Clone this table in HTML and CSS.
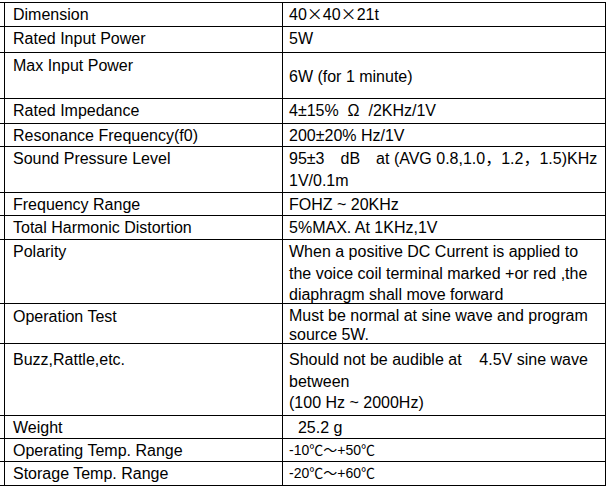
FILE: index.html
```html
<!DOCTYPE html>
<html>
<head>
<meta charset="utf-8">
<link rel="stylesheet" href="styles.css">
</head>
<body>
<div class="spec">
  <div class="row h24"><div class="k">Dimension</div><div class="v">40<span class="cjk">×</span>40<span class="cjk">×</span>21t</div></div>
  <div class="row h26"><div class="k">Rated Input Power</div><div class="v">5W</div></div>
  <div class="row h46"><div class="k p1">Max Input Power</div><div class="v mid">6W (for 1 minute)</div></div>
  <div class="row h25"><div class="k">Rated Impedance</div><div class="v">4±15%&nbsp; Ω&nbsp;&nbsp;/2KHz/1V</div></div>
  <div class="row h23"><div class="k">Resonance Frequency(f0)</div><div class="v">200±20% Hz/1V</div></div>
  <div class="row h46"><div class="k">Sound Pressure Level</div><div class="v">95±3<span class="cjk">　</span>dB<span class="cjk">　</span>at (AVG 0.8,1.0<span class="cjk">，</span>1.2<span class="cjk">，</span>1.5)KHz<br>1V/0.1m</div></div>
  <div class="row h23"><div class="k">Frequency Range</div><div class="v">FOHZ ~ 20KHz</div></div>
  <div class="row h24"><div class="k">Total Harmonic Distortion</div><div class="v">5%MAX. At 1KHz,1V</div></div>
  <div class="row h64"><div class="k">Polarity</div><div class="v">When a positive DC Current is applied to the voice coil terminal marked +or red ,the diaphragm shall move forward</div></div>
  <div class="row h40"><div class="k p1">Operation Test</div><div class="v tight">Must be normal at sine wave and program source 5W.</div></div>
  <div class="row h72"><div class="k p4">Buzz,Rattle,etc.</div><div class="v p4">Should not be audible at&nbsp;&nbsp;&nbsp; 4.5V sine wave between<br>(100 Hz ~ 2000Hz)</div></div>
  <div class="row h23"><div class="k">Weight</div><div class="v">&nbsp;&nbsp;25.2 g</div></div>
  <div class="row h23"><div class="k">Operating Temp. Range</div><div class="v small">-10<span class="cjk">℃～</span>+50<span class="cjk">℃</span></div></div>
  <div class="row h24"><div class="k">Storage Temp. Range</div><div class="v small">-20<span class="cjk">℃～</span>+60<span class="cjk">℃</span></div></div>
</div>
</body>
</html>
```
FILE: styles.css
```css
html, body {
  margin: 0;
  padding: 0;
  background: #fff;
}
body {
  font-family: "Liberation Sans", Arial, "Noto Sans CJK SC", sans-serif;
  font-size: 16px;
  line-height: 21.5px;
  color: #000;
}
.spec {
  margin-top: 2px;
  width: 606px;
  border-top: 1px solid #000;
}
.row {
  display: flex;
  box-sizing: border-box;
  border-bottom: 1px solid #000;
}
.h23 { height: 23px; }
.h24 { height: 24px; }
.h25 { height: 25px; }
.h26 { height: 26px; }
.h40 { height: 40px; }
.h46 { height: 46px; }
.h64 { height: 64px; }
.h72 { height: 72px; }
.k {
  margin-left: 4px;
  width: 278px;
  box-sizing: border-box;
  border-left: 1px solid #000;
  padding-left: 8px;
  padding-top: 1px;
  white-space: nowrap;
}
.v {
  flex: 1;
  box-sizing: border-box;
  border-left: 1px solid #000;
  border-right: 1px solid #000;
  padding-left: 6px;
  padding-right: 4px;
  padding-top: 1px;
}
.k.p1, .v.p1 { padding-top: 2px; }
.k.p4, .v.p4 { padding-top: 5px; }
.v.tight {
  line-height: 18.5px;
  padding-top: 3px;
}
.v.mid {
  display: flex;
  align-items: center;
  padding-top: 2px;
}
.cjk {
  font-family: "Noto Sans CJK SC", sans-serif;
  line-height: 1;
}
.small {
  font-size: 14px;
}
```
